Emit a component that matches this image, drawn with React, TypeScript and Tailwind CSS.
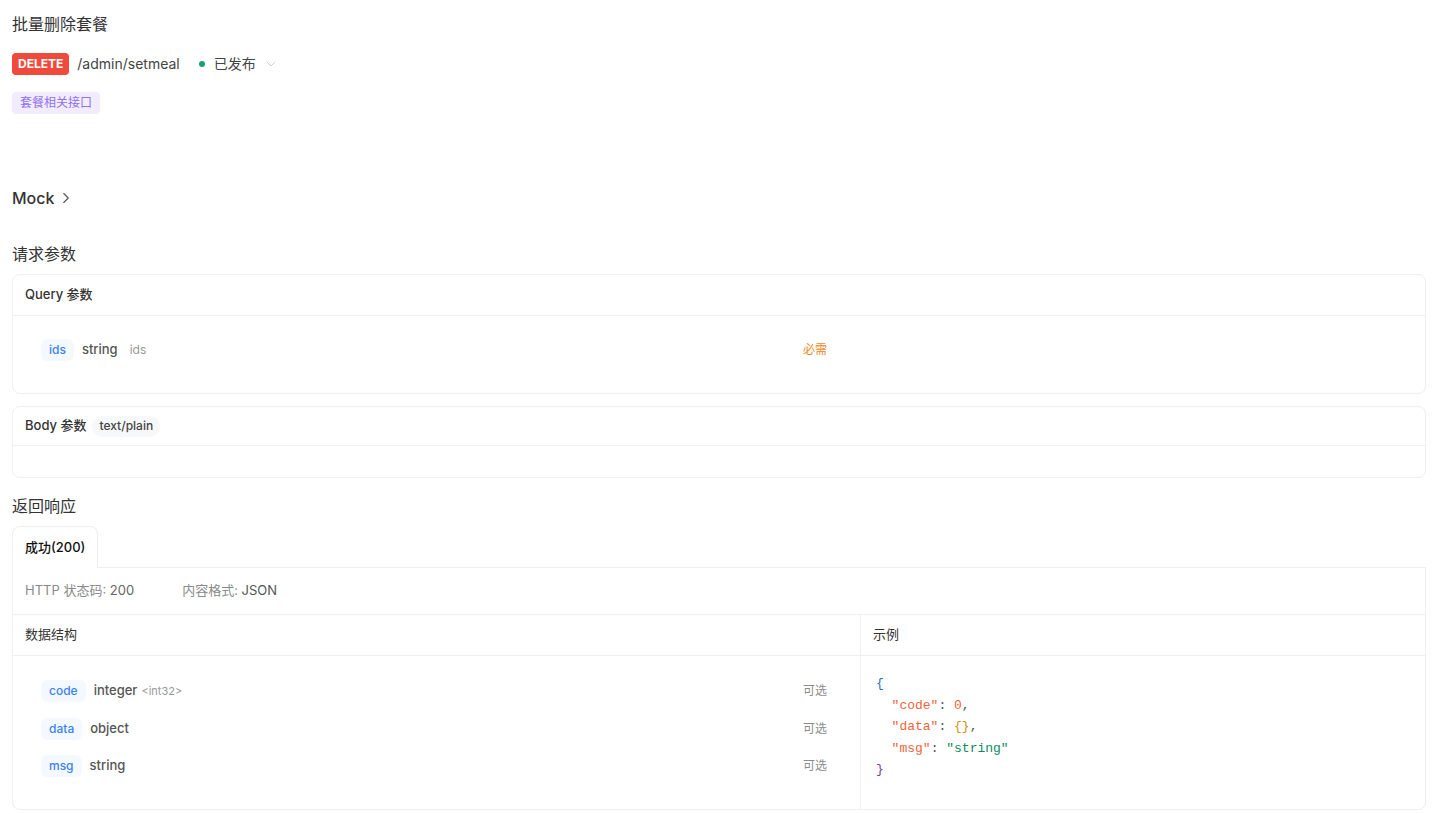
import { ChevronDown, ChevronRight } from 'lucide-react';

const font = { fontFamily: 'Inter, "Noto Sans CJK SC", sans-serif' };

type Field = { name: string; type: string; format?: string; note?: string; flag: string; flagColor: string };

const queryFields: Field[] = [
  { name: 'ids', type: 'string', note: 'ids', flag: '必需', flagColor: 'text-[#f08a24]' },
];

const responseFields: Field[] = [
  { name: 'code', type: 'integer', format: '<int32>', flag: '可选', flagColor: 'text-[#8c8c8c]' },
  { name: 'data', type: 'object', flag: '可选', flagColor: 'text-[#8c8c8c]' },
  { name: 'msg', type: 'string', flag: '可选', flagColor: 'text-[#8c8c8c]' },
];

export default function App() {
  return (
    <div className="min-h-screen bg-white pb-2 pl-3 pr-[18px] pt-3 text-[#333]" style={font}>
      {/* title */}
      <h1 className="text-base leading-6 text-[#333]">批量删除套餐</h1>

      {/* method + path */}
      <div className="mt-[17px] flex h-[22px] items-center">
        <span className="flex h-[22px] items-center rounded bg-[#ef4a3c] px-[6px] text-xs font-bold text-white">
          DELETE
        </span>
        <span className="ml-[8px] text-sm text-[#444]">/admin/setmeal</span>
        <span className="ml-[19px] h-1.5 w-1.5 rounded-full bg-[#1f9f6e]" />
        <span className="ml-[9px] text-sm text-[#444]">已发布</span>
        <ChevronDown className="ml-[7px] h-4 w-4 text-[#c4c4c4]" strokeWidth={1.25} />
      </div>

      {/* tag */}
      <div className="mt-[17px] flex">
        <span className="flex h-[22px] items-center rounded bg-[#f1edff] px-2 text-xs text-[#9270f0]">
          套餐相关接口
        </span>
      </div>

      {/* mock */}
      <div className="mt-[72px] flex h-6 items-center gap-[3px] text-base text-[#333]">
        <span className="font-medium">Mock</span>
        <ChevronRight className="h-[18px] w-[18px] text-[#555]" strokeWidth={1.5} />
      </div>

      {/* request params */}
      <h2 className="mt-8 text-base leading-6">请求参数</h2>

      <div className="mt-2 rounded-lg border border-[#eeeff2]">
        <div className="flex h-[41px] items-center border-b border-[#eeeff2] px-3 text-[13px] font-medium text-[#333]">
          Query 参数
        </div>
        <div className="pb-[32px] pt-[23px]">
          {queryFields.map((f) => (
            <FieldRow key={f.name} field={f} />
          ))}
        </div>
      </div>

      <div className="mt-3 rounded-lg border border-[#eeeff2]">
        <div className="flex h-[39px] items-center gap-[6px] border-b border-[#eeeff2] px-3 text-[13px] font-medium text-[#333]">
          <span>Body 参数</span>
          <span className="flex h-[21px] items-center rounded-full bg-[#f7f8fa] px-[7px] text-xs font-medium text-[#444]">
            text/plain
          </span>
        </div>
        <div className="h-[31px]" />
      </div>

      {/* response */}
      <h2 className="mt-4 text-base leading-6">返回响应</h2>

      <div className="mt-2 flex">
        <div className="flex h-[42px] items-center rounded-t-lg border border-b-0 border-[#eeeff2] px-3 text-[13px] font-medium text-[#111]">
          成功(200)
        </div>
        <div className="flex-1 border-b border-[#eeeff2]" />
      </div>

      <div className="rounded-b-lg border border-t-0 border-[#eeeff2]">
        <div className="flex h-[47px] items-center border-b border-[#eeeff2] px-3 text-[13px]">
          <span className="text-[#8a8a8a]">
            HTTP 状态码: <span className="text-[#666]">200</span>
          </span>
          <span className="ml-[48px] text-[#8a8a8a]">
            内容格式: <span className="text-[#555]">JSON</span>
          </span>
        </div>

        <div className="flex">
          <div className="w-[848px] border-r border-[#eeeff2]">
            <div className="flex h-[41px] items-center border-b border-[#eeeff2] px-3 text-[13px] text-[#333]">
              数据结构
            </div>
            <div className="flex flex-col gap-[15.5px] pb-[32px] pt-6">
              {responseFields.map((f) => (
                <FieldRow key={f.name} field={f} />
              ))}
            </div>
          </div>
          <div className="flex-1">
            <div className="flex h-[41px] items-center border-b border-[#eeeff2] px-3 text-[13px] text-[#333]">
              示例
            </div>
            <pre
              className="pl-[15px] pt-[17px] text-[13px] leading-[21.5px]"
              style={{ fontFamily: '"Liberation Mono", "DejaVu Sans Mono", monospace' }}
            >
              <span className="text-[#1d6fa5]">{'{'}</span>
              {'\n  '}
              <span className="text-[#f0643c]">"code"</span>
              <span className="text-[#555]">: </span>
              <span className="text-[#f0643c]">0</span>
              <span className="text-[#555]">,</span>
              {'\n  '}
              <span className="text-[#f0643c]">"data"</span>
              <span className="text-[#555]">: </span>
              <span className="text-[#d4900a]">{'{}'}</span>
              <span className="text-[#555]">,</span>
              {'\n  '}
              <span className="text-[#f0643c]">"msg"</span>
              <span className="text-[#555]">: </span>
              <span className="text-[#0f8a5f]">"string"</span>
              {'\n'}
              <span className="text-[#7a3fa0]">{'}'}</span>
            </pre>
          </div>
        </div>
      </div>
    </div>
  );
}

function FieldRow({ field }: { field: Field }) {
  return (
    <div className="flex h-[22px] items-center pl-[28px]">
      <div className="flex w-[762px] items-center">
        <span className="flex h-[22px] items-center rounded-md bg-[#f4f8ff] px-2 text-xs font-medium text-[#3b82f6]">
          {field.name}
        </span>
        <span className="ml-[8px] text-[13px] font-medium text-[#555]">{field.type}</span>
        {field.format && <span className="ml-1 text-[11px] text-[#999]">{field.format}</span>}
        {field.note && <span className="ml-3 text-xs text-[#999]">{field.note}</span>}
      </div>
      <span className={`text-xs ${field.flagColor}`}>{field.flag}</span>
    </div>
  );
}
